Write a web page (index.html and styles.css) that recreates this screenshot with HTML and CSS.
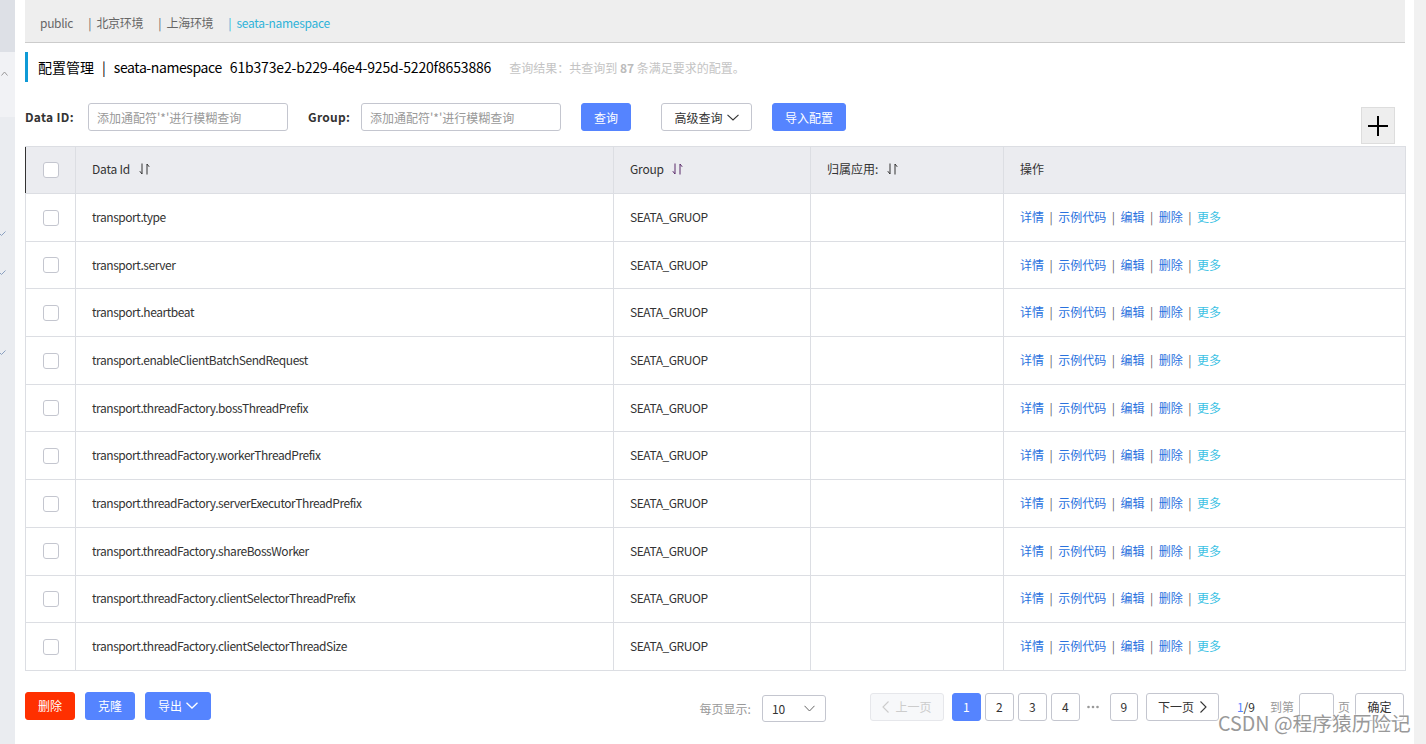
FILE: index.html
```html
<!DOCTYPE html>
<html lang="zh-CN">
<head>
<meta charset="utf-8">
<title>配置管理</title>
<link rel="stylesheet" href="styles.css">
</head>
<body>
<div class="app">
  <aside class="sidebar">
    <div class="sb-top"></div>
    <div class="sb-sel"><svg class="sb-caret" width="7" height="5" viewBox="0 0 7 5"><path d="M0.5 4.5 L3.5 1 L6.5 4.5" fill="none" stroke="#999" stroke-width="1"/></svg></div>
    <div class="sb-rest">
      <svg class="sb-check c1" width="6" height="5" viewBox="0 0 6 5"><path d="M0 3 L1.5 4.5 L5.5 0.5" fill="none" stroke="#8aa0c0" stroke-width="1"/></svg>
      <svg class="sb-check c2" width="6" height="5" viewBox="0 0 6 5"><path d="M0 3 L1.5 4.5 L5.5 0.5" fill="none" stroke="#8aa0c0" stroke-width="1"/></svg>
      <svg class="sb-check c3" width="6" height="5" viewBox="0 0 6 5"><path d="M0 3 L1.5 4.5 L5.5 0.5" fill="none" stroke="#8aa0c0" stroke-width="1"/></svg>
    </div>
  </aside>

  <main class="main">
    <div class="topbar">
      <span class="ns">public</span>
      <span class="ns"><span class="ns-sep">|</span>北京环境</span>
      <span class="ns"><span class="ns-sep">|</span>上海环境</span>
      <span class="ns ns-active"><span class="ns-sep">|</span>seata-namespace</span>
    </div>

    <div class="title">
      <span class="t-main">配置管理</span>
      <span class="t-sep">|</span>
      <span class="t-ns">seata-namespace</span>
      <span class="t-id">61b373e2-b229-46e4-925d-5220f8653886</span>
      <span class="t-result">查询结果：共查询到 <b>87</b> 条满足要求的配置。</span>
    </div>

    <div class="search">
      <label class="s-label">Data ID:</label>
      <input class="s-input" type="text" placeholder="添加通配符'*'进行模糊查询">
      <label class="s-label s-label2">Group:</label>
      <input class="s-input" type="text" placeholder="添加通配符'*'进行模糊查询">
      <button class="btn btn-primary btn-query">查询</button>
      <button class="btn btn-normal btn-adv">高级查询 <svg width="12" height="7" viewBox="0 0 12 7"><path d="M0.5 0.8 L6 6 L11.5 0.8" fill="none" stroke="#333" stroke-width="1.1"/></svg></button>
      <button class="btn btn-primary btn-import">导入配置</button>
      <button class="plus"><svg width="22" height="22" viewBox="0 0 22 22"><path d="M11 1 V21 M1 11 H21" stroke="#000" stroke-width="2"/></svg></button>
    </div>

    <table class="grid">
      <colgroup>
        <col class="c-check"><col class="c-id"><col class="c-group"><col class="c-app"><col class="c-op">
      </colgroup>
      <thead>
        <tr>
          <th class="th-check"><span class="cb"></span></th>
          <th class="latin">Data Id <svg class="sort" width="11" height="12" viewBox="0 0 11 12"><path d="M3 0.5 V11 L0.8 8.2 M8 11.5 V1 L10.2 3.8" fill="none" stroke="#333" stroke-width="1"/></svg></th>
          <th class="latin">Group <svg class="sort" width="11" height="12" viewBox="0 0 11 12"><path d="M3 0.5 V11 L0.8 8.2 M8 11.5 V1 L10.2 3.8" fill="none" stroke="#5a2a6a" stroke-width="1"/></svg></th>
          <th>归属应用: <svg class="sort" width="11" height="12" viewBox="0 0 11 12"><path d="M3 0.5 V11 L0.8 8.2 M8 11.5 V1 L10.2 3.8" fill="none" stroke="#333" stroke-width="1"/></svg></th>
          <th>操作</th>
        </tr>
      </thead>
      <tbody>
        <tr><td class="td-check"><span class="cb"></span></td><td class="latin">transport.type</td><td class="latin">SEATA_GRUOP</td><td></td><td class="ops"><a>详情</a><span class="sep">|</span><a>示例代码</a><span class="sep">|</span><a>编辑</a><span class="sep">|</span><a>删除</a><span class="sep">|</span><a class="more">更多</a></td></tr>
        <tr><td class="td-check"><span class="cb"></span></td><td class="latin">transport.server</td><td class="latin">SEATA_GRUOP</td><td></td><td class="ops"><a>详情</a><span class="sep">|</span><a>示例代码</a><span class="sep">|</span><a>编辑</a><span class="sep">|</span><a>删除</a><span class="sep">|</span><a class="more">更多</a></td></tr>
        <tr><td class="td-check"><span class="cb"></span></td><td class="latin">transport.heartbeat</td><td class="latin">SEATA_GRUOP</td><td></td><td class="ops"><a>详情</a><span class="sep">|</span><a>示例代码</a><span class="sep">|</span><a>编辑</a><span class="sep">|</span><a>删除</a><span class="sep">|</span><a class="more">更多</a></td></tr>
        <tr><td class="td-check"><span class="cb"></span></td><td class="latin">transport.enableClientBatchSendRequest</td><td class="latin">SEATA_GRUOP</td><td></td><td class="ops"><a>详情</a><span class="sep">|</span><a>示例代码</a><span class="sep">|</span><a>编辑</a><span class="sep">|</span><a>删除</a><span class="sep">|</span><a class="more">更多</a></td></tr>
        <tr><td class="td-check"><span class="cb"></span></td><td class="latin">transport.threadFactory.bossThreadPrefix</td><td class="latin">SEATA_GRUOP</td><td></td><td class="ops"><a>详情</a><span class="sep">|</span><a>示例代码</a><span class="sep">|</span><a>编辑</a><span class="sep">|</span><a>删除</a><span class="sep">|</span><a class="more">更多</a></td></tr>
        <tr><td class="td-check"><span class="cb"></span></td><td class="latin">transport.threadFactory.workerThreadPrefix</td><td class="latin">SEATA_GRUOP</td><td></td><td class="ops"><a>详情</a><span class="sep">|</span><a>示例代码</a><span class="sep">|</span><a>编辑</a><span class="sep">|</span><a>删除</a><span class="sep">|</span><a class="more">更多</a></td></tr>
        <tr><td class="td-check"><span class="cb"></span></td><td class="latin">transport.threadFactory.serverExecutorThreadPrefix</td><td class="latin">SEATA_GRUOP</td><td></td><td class="ops"><a>详情</a><span class="sep">|</span><a>示例代码</a><span class="sep">|</span><a>编辑</a><span class="sep">|</span><a>删除</a><span class="sep">|</span><a class="more">更多</a></td></tr>
        <tr><td class="td-check"><span class="cb"></span></td><td class="latin">transport.threadFactory.shareBossWorker</td><td class="latin">SEATA_GRUOP</td><td></td><td class="ops"><a>详情</a><span class="sep">|</span><a>示例代码</a><span class="sep">|</span><a>编辑</a><span class="sep">|</span><a>删除</a><span class="sep">|</span><a class="more">更多</a></td></tr>
        <tr><td class="td-check"><span class="cb"></span></td><td class="latin">transport.threadFactory.clientSelectorThreadPrefix</td><td class="latin">SEATA_GRUOP</td><td></td><td class="ops"><a>详情</a><span class="sep">|</span><a>示例代码</a><span class="sep">|</span><a>编辑</a><span class="sep">|</span><a>删除</a><span class="sep">|</span><a class="more">更多</a></td></tr>
        <tr><td class="td-check"><span class="cb"></span></td><td class="latin">transport.threadFactory.clientSelectorThreadSize</td><td class="latin">SEATA_GRUOP</td><td></td><td class="ops"><a>详情</a><span class="sep">|</span><a>示例代码</a><span class="sep">|</span><a>编辑</a><span class="sep">|</span><a>删除</a><span class="sep">|</span><a class="more">更多</a></td></tr>
      </tbody>
    </table>

    <div class="footer">
      <button class="btn btn-danger">删除</button>
      <button class="btn btn-primary btn-clone">克隆</button>
      <button class="btn btn-primary btn-export">导出 <svg width="12" height="7" viewBox="0 0 12 7"><path d="M0.5 0.8 L6 6 L11.5 0.8" fill="none" stroke="#fff" stroke-width="1.3"/></svg></button>

      <div class="pager">
        <span class="p-label">每页显示:</span>
        <div class="p-select"><span>10</span><svg width="11" height="7" viewBox="0 0 11 7"><path d="M0.5 0.8 L5.5 6 L10.5 0.8" fill="none" stroke="#666" stroke-width="1"/></svg></div>
        <button class="p-btn p-prev" disabled><svg width="7" height="12" viewBox="0 0 7 12"><path d="M6.5 0.5 L1 6 L6.5 11.5" fill="none" stroke="#ccc" stroke-width="1.1"/></svg> 上一页</button>
        <button class="p-btn p-num p-cur">1</button>
        <button class="p-btn p-num">2</button>
        <button class="p-btn p-num">3</button>
        <button class="p-btn p-num">4</button>
        <svg class="p-ellipsis" width="12" height="4" viewBox="0 0 12 4"><circle cx="1.5" cy="2" r="1.3" fill="#999"/><circle cx="6" cy="2" r="1.3" fill="#999"/><circle cx="10.5" cy="2" r="1.3" fill="#999"/></svg>
        <button class="p-btn p-num p-nine">9</button>
        <button class="p-btn p-next">下一页 <svg width="7" height="12" viewBox="0 0 7 12"><path d="M0.5 0.5 L6 6 L0.5 11.5" fill="none" stroke="#333" stroke-width="1.1"/></svg></button>
        <span class="p-total"><em>1</em>/9</span>
        <span class="p-goto">到第</span>
        <input class="p-input" type="text">
        <span class="p-page">页</span>
        <button class="p-btn p-ok">确定</button>
      </div>
    </div>
  </main>

  <div class="scroll"></div>
</div>
<div class="watermark">CSDN @程序猿历险记</div>
</body>
</html>
```

FILE: styles.css
```css
* { box-sizing: border-box; }
html, body { margin: 0; padding: 0; }
body {
  font-family: "Noto Sans CJK SC", "Noto Sans", sans-serif;
  font-size: 12px;
  color: #333;
  background: #fff;
  width: 1426px;
  height: 744px;
  overflow: hidden;
  position: relative;
}
.app { display: flex; height: 744px; }

/* sidebar */
.sidebar { width: 15px; background: #eaecf0; display: flex; flex-direction: column; flex: none; }
.sb-top { height: 52px; background: #dde0e6; }
.sb-sel { height: 65px; background: #f1f2f5; padding-top: 19px; }
.sb-caret { display: block; margin-left: 1px; }
.sb-rest { display: flex; flex-direction: column; }
.sb-check { display: block; }
.c1 { margin-top: 114px; }
.c2 { margin-top: 34px; }
.c3 { margin-top: 75px; }

/* main */
.main { width: 1380px; margin-left: 10px; flex: none; }
.scroll { width: 12px; margin-left: 9px; background: #f1f1f1; flex: none; }

.topbar {
  height: 43px;
  background: #eeeeee;
  border-bottom: 1px solid #cccccc;
  display: flex;
  align-items: center;
  padding-left: 15px;
  padding-top: 2px;
}
.ns { color: #666; margin-right: 15px; font-size: 12px; letter-spacing: -0.3px; }
.ns-sep { margin-right: 5px; letter-spacing: 0; }
.ns-active { color: #2fb3d9; }

.title {
  margin-top: 9px;
  height: 30px;
  border-left: 3px solid #0e9ad6;
  padding-left: 10px;
  display: flex;
  align-items: center;
  font-size: 14px;
  color: #000;
}
.t-sep { margin: 0 8px 0 8px; }
.t-ns { margin-right: 8px; letter-spacing: -0.4px; }
.t-id { letter-spacing: -0.17px; }
.t-result { margin-left: 18px; font-size: 12px; color: #c4c4c4; }
.t-result b { color: #bbb; }

.search {
  margin-top: 21px;
  display: flex;
  align-items: flex-start;
}
.s-label { font-weight: bold; font-size: 12px; line-height: 28px; color: #333; width: 63px; letter-spacing: 0.3px; }
.s-label2 { width: 53px; margin-left: 20px; }
.s-input {
  width: 200px; height: 28px;
  border: 1px solid #c4c6cf; border-radius: 3px;
  padding: 0 8px;
  font-family: inherit; font-size: 12px; color: #333;
  outline: none;
}
.s-input::placeholder { color: #999; }

.btn {
  height: 28px;
  border-radius: 3px;
  font-family: inherit;
  font-size: 12px;
  padding: 0;
  cursor: pointer;
  display: inline-flex; align-items: center; justify-content: center;
}
.btn svg { margin-left: 4px; }
.btn-primary { background: #5584ff; border: 1px solid #5584ff; color: #fff; }
.btn-normal { background: #fff; border: 1px solid #c4c6cf; color: #333; }
.btn-danger { background: #ff3000; border: 1px solid #ff3000; color: #fff; width: 50px; }
.btn-query { width: 50px; margin-left: 20px; }
.btn-adv { width: 91px; margin-left: 30px; }
.btn-import { width: 74px; margin-left: 20px; }

.plus {
  margin-left: auto;
  margin-right: 10px;
  margin-top: 4px;
  width: 34px; height: 37px;
  background: #eeeeee;
  border: 1px solid #dddddd;
  padding: 0;
  display: flex; align-items: center; justify-content: center;
}

/* table */
.grid {
  margin-top: 2px;
  width: 1380px;
  border-collapse: collapse;
  table-layout: fixed;
  border: 1px solid #dcdee3;
}
.c-check { width: 50px; }
.c-id { width: 538px; }
.c-group { width: 197px; }
.c-app { width: 193px; }
.c-op { width: 402px; }
.grid th, .grid td {
  border: 1px solid #dcdee3;
  padding: 0 0 2px 16px;
  text-align: left;
  font-weight: normal;
  font-size: 12px;
  color: #333;
  white-space: nowrap;
}
.grid th { padding-bottom: 3px; }
.grid .latin { letter-spacing: -0.45px; }
.grid th.latin { letter-spacing: -0.2px; }
.grid thead tr { height: 47px; background: #ebecf0; }
.grid tbody tr { height: 47.7px; }
.grid th.th-check { border-left: 1px solid #333; }
.th-check, .td-check { padding: 0 !important; text-align: center !important; }
.cb {
  display: inline-block;
  width: 16px; height: 16px;
  border: 1px solid #c4c6cf;
  border-radius: 3px;
  background: #fff;
  vertical-align: middle;
  margin-top: -4px;
}
.sort { vertical-align: -1px; margin-left: 6px; }

.ops a { color: #2a72de; }
.ops a.more { color: #3cc2e4; }
.sep { color: #666; margin: 0 5.5px; }

/* footer */
.footer {
  margin-top: 21px;
  display: flex;
  align-items: flex-start;
}
.btn-clone { width: 50px; margin-left: 10px; }
.btn-export { width: 66px; margin-left: 10px; }

.pager { margin-left: auto; display: flex; align-items: center; margin-right: 1px; }
.p-label { color: #999; margin-right: 11px; padding-top: 4px; }
.p-select {
  width: 64px; height: 27px; margin-top: 3px;
  border: 1px solid #c4c6cf; border-radius: 3px;
  display: flex; align-items: center; justify-content: space-between;
  padding: 0 10px 0 9px;
  color: #333;
}
.p-btn {
  height: 28px;
  border: 1px solid #c4c6cf;
  border-radius: 3px;
  background: #fff;
  font-family: inherit; font-size: 12px; color: #333;
  padding: 0;
  display: inline-flex; align-items: center; justify-content: center;
}
.p-prev { width: 74px; margin-left: 44px; background: #f7f8fa; border-color: #e6e7eb; color: #ccc; }
.p-prev svg { margin-right: 6px; }
.p-next svg { margin-left: 6px; }
.p-num { width: 29px; margin-left: 4px; }
.p-cur { background: #5584ff; border-color: #5584ff; color: #fff; margin-left: 8px; }
.p-ellipsis { margin: 0 11px 0 7px; flex: none; }
.p-nine { margin-left: 0; width: 28px; }
.p-next { width: 73px; margin-left: 8px; }
.p-total { margin-left: 18px; color: #333; }
.p-total em { font-style: normal; color: #5584ff; }
.p-goto { margin-left: 15px; color: #999; }
.p-input { width: 35px; height: 28px; margin-left: 5px; border: 1px solid #c4c6cf; border-radius: 3px; outline: none; }
.p-page { margin-left: 4px; color: #999; }
.p-ok { width: 49px; margin-left: 5px; }

.watermark {
  position: absolute;
  left: 1218px;
  top: 708px;
  font-family: "Noto Sans CJK SC", "Liberation Sans", sans-serif;
  font-size: 19.7px;
  color: #999;
  text-shadow: 0 0 2px #fff, 0 0 2px #fff;
  white-space: nowrap;
}
```
